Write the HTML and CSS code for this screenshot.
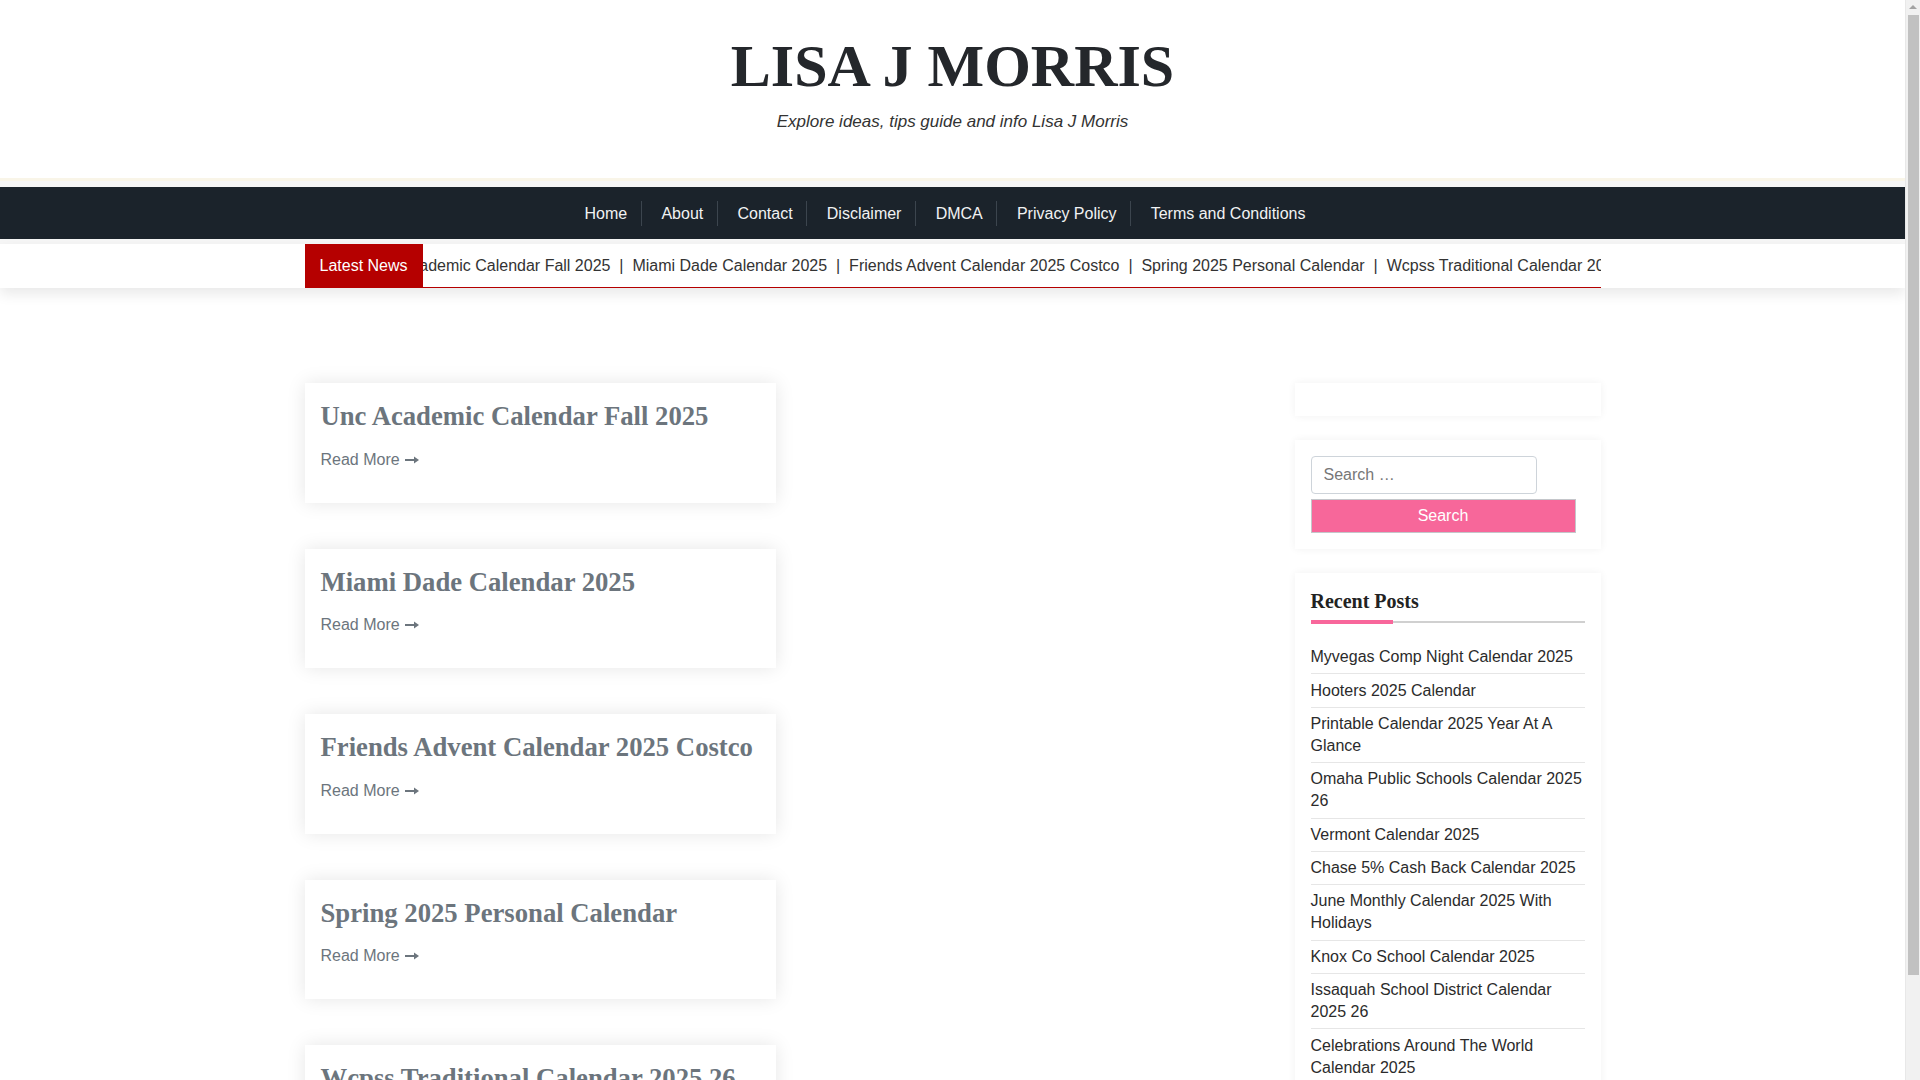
FILE: index.html
```html
<!DOCTYPE html>
<html lang="en">
<head>
<meta charset="utf-8">
<title>LISA J MORRIS</title>
<link rel="stylesheet" href="styles.css">
</head>
<body>
<header class="site-header">
  <h1 class="site-title">LISA J MORRIS</h1>
  <p class="site-tagline">Explore ideas, tips guide and info Lisa J Morris</p>
</header>
<div class="nav-wrap">
  <nav class="main-nav">
    <ul class="menu">
      <li class="menu-item">Home</li>
      <li class="menu-item">About</li>
      <li class="menu-item">Contact</li>
      <li class="menu-item">Disclaimer</li>
      <li class="menu-item">DMCA</li>
      <li class="menu-item">Privacy Policy</li>
      <li class="menu-item last">Terms and Conditions</li>
    </ul>
  </nav>
</div>
<div class="ticker-band">
  <div class="container">
    <div class="ticker">
      <span class="ticker-label">Latest News</span>
      <div class="ticker-window">
        <div class="ticker-track">
          <span class="ticker-item">Unc Academic Calendar Fall 2025</span><span class="ticker-sep">|</span><span class="ticker-item">Miami Dade Calendar 2025</span><span class="ticker-sep">|</span><span class="ticker-item">Friends Advent Calendar 2025 Costco</span><span class="ticker-sep">|</span><span class="ticker-item">Spring 2025 Personal Calendar</span><span class="ticker-sep">|</span><span class="ticker-item">Wcpss Traditional Calendar 2025 26</span>
        </div>
      </div>
    </div>
  </div>
</div>
<main class="container main">
  <div class="layout">
    <section class="posts">
      <article class="card">
        <h2 class="card-title">Unc Academic Calendar Fall 2025</h2>
        <a class="read-more">Read More <svg class="arrow" viewBox="0 0 14 10" width="14" height="10"><path d="M0 5H10" stroke="currentColor" stroke-width="2"/><path d="M9 1.5L14 5L9 8.5Z" fill="currentColor"/></svg></a>
      </article>
      <article class="card">
        <h2 class="card-title">Miami Dade Calendar 2025</h2>
        <a class="read-more">Read More <svg class="arrow" viewBox="0 0 14 10" width="14" height="10"><path d="M0 5H10" stroke="currentColor" stroke-width="2"/><path d="M9 1.5L14 5L9 8.5Z" fill="currentColor"/></svg></a>
      </article>
      <article class="card">
        <h2 class="card-title">Friends Advent Calendar 2025 Costco</h2>
        <a class="read-more">Read More <svg class="arrow" viewBox="0 0 14 10" width="14" height="10"><path d="M0 5H10" stroke="currentColor" stroke-width="2"/><path d="M9 1.5L14 5L9 8.5Z" fill="currentColor"/></svg></a>
      </article>
      <article class="card">
        <h2 class="card-title">Spring 2025 Personal Calendar</h2>
        <a class="read-more">Read More <svg class="arrow" viewBox="0 0 14 10" width="14" height="10"><path d="M0 5H10" stroke="currentColor" stroke-width="2"/><path d="M9 1.5L14 5L9 8.5Z" fill="currentColor"/></svg></a>
      </article>
      <article class="card">
        <h2 class="card-title">Wcpss Traditional Calendar 2025 26</h2>
        <a class="read-more">Read More <svg class="arrow" viewBox="0 0 14 10" width="14" height="10"><path d="M0 5H10" stroke="currentColor" stroke-width="2"/><path d="M9 1.5L14 5L9 8.5Z" fill="currentColor"/></svg></a>
      </article>
    </section>
    <aside class="sidebar">
      <div class="widget widget-empty"></div>
      <div class="widget widget-search">
        <input class="search-field" type="search" placeholder="Search …">
        <button class="search-submit" type="button">Search</button>
      </div>
      <div class="widget widget-recent">
        <h3 class="widget-title">Recent Posts</h3>
        <ul class="recent-list">
          <li>Myvegas Comp Night Calendar 2025</li>
          <li>Hooters 2025 Calendar</li>
          <li>Printable Calendar 2025 Year At A Glance</li>
          <li>Omaha Public Schools Calendar 2025 26</li>
          <li>Vermont Calendar 2025</li>
          <li>Chase 5% Cash Back Calendar 2025</li>
          <li>June Monthly Calendar 2025 With Holidays</li>
          <li>Knox Co School Calendar 2025</li>
          <li>Issaquah School District Calendar 2025 26</li>
          <li>Celebrations Around The World Calendar 2025</li>
        </ul>
      </div>
    </aside>
  </div>
</main>
<div class="scrollbar" aria-hidden="true">
  <span class="scroll-arrow"></span>
  <span class="scroll-thumb"></span>
</div>
</body>
</html>
```
FILE: styles.css
```css
* { box-sizing: border-box; }
html, body { margin: 0; padding: 0; }
body {
  width: 1905px;
  font-family: "Liberation Sans", Arial, sans-serif;
  font-size: 16px;
  line-height: 1.5;
  color: #333;
  background: #fff;
}
.container {
  width: 1296px;
  margin: 0 auto;
}

/* Header */
.site-header {
  text-align: center;
  padding: 30px 0 44px;
  border-bottom: 3px solid #f9f5e8;
}
.site-title {
  margin: 0;
  font-family: "Liberation Serif", "Times New Roman", serif;
  font-weight: 700;
  font-size: 60px;
  line-height: 72px;
  color: #24272b;
}
.site-tagline {
  margin: 7px 0 0;
  font-style: italic;
  font-size: 17px;
  line-height: 25px;
  color: #333;
}

/* Nav */
.nav-wrap {
  background: #f6f6f6;
  padding: 6px 0 5px;
}
.main-nav {
  background: #1b232b;
  height: 52px;
  display: flex;
  justify-content: center;
  align-items: center;
}
.menu {
  list-style: none;
  margin: 0;
  padding: 0 21px 0 0;
  display: flex;
  align-items: center;
}
.menu-item {
  color: #f1f2f3;
  font-size: 16px;
  line-height: 25px;
  padding: 0 13.6px 0 19.6px;
  border-right: 1px solid #3c454e;
}
.menu-item.last { border-right: none; }

/* Ticker */
.ticker-band {
  background: #fff;
  box-shadow: 0 6px 14px rgba(0, 0, 0, 0.09);
  position: relative;
}
.ticker {
  display: flex;
  height: 44px;
  border-bottom: 1px solid #b50000;
}
.ticker-label {
  flex: none;
  height: 43px;
  line-height: 43px;
  padding: 0 15px;
  background: #b50000;
  color: #fff;
  font-size: 16px;
}
.ticker-window {
  flex: 1;
  min-width: 0;
  overflow: hidden;
}
.ticker-track {
  white-space: nowrap;
  margin-left: -54px;
  line-height: 43px;
  font-size: 16px;
  color: #333;
}
.ticker-sep { margin: 0 8.9px; }

/* Main */
.main { padding: 95px 0 40px; }
.layout {
  display: grid;
  grid-template-columns: 966px 306px;
  column-gap: 24px;
  align-items: start;
}
.posts {
  display: grid;
  grid-template-columns: 471px 471px;
  column-gap: 24px;
  row-gap: 46px;
}
.card {
  grid-column: 1;
  background: #fff;
  padding: 18px 16px 16px;
  box-shadow: 0 0 18px rgba(0, 0, 0, 0.1);
}
.card-title {
  margin: 0 0 15px;
  font-family: "Liberation Serif", "Times New Roman", serif;
  font-weight: 700;
  font-size: 26.7px;
  line-height: 31.5px;
  color: #6c757d;
}
.read-more {
  display: block;
  margin-bottom: 15px;
  color: #6c757d;
  font-size: 16px;
  line-height: 24px;
}
.arrow { vertical-align: 0; margin-left: 1px; }

/* Sidebar */
.widget {
  background: #fff;
  padding: 16px;
  margin-bottom: 24px;
  box-shadow: 0 0 8px rgba(0, 0, 0, 0.06);
}
.widget-empty { height: 33px; }
.search-field {
  display: block;
  width: 226px;
  height: 38px;
  padding: 6px 12px;
  border: 1px solid #ced4da;
  border-radius: 4px;
  font-family: inherit;
  font-size: 16px;
  line-height: 24px;
  color: #333;
  margin: 0 0 5px;
}
.search-field::placeholder { color: #777; }
.search-submit {
  display: block;
  width: 265px;
  height: 34px;
  background: #f7679a;
  border: 1px solid #c4c6ca;
  color: #fff;
  font-family: inherit;
  font-size: 16px;
  padding: 0;
}
.widget-title {
  position: relative;
  margin: 0 0 18px;
  padding-bottom: 8px;
  font-family: "Liberation Serif", "Times New Roman", serif;
  font-weight: 700;
  font-size: 20px;
  line-height: 24px;
  color: #222;
  border-bottom: 2px solid #d0d0d0;
}
.widget-title::after {
  content: "";
  position: absolute;
  left: 0;
  bottom: -3px;
  width: 82px;
  height: 4px;
  background: #f8679b;
}
.recent-list {
  list-style: none;
  margin: 0;
  padding: 0;
}
.recent-list li {
  padding: 5.2px 0;
  line-height: 22px;
  font-size: 16px;
  color: #2b2b2b;
  border-bottom: 1px solid #e6e6e6;
}
.recent-list li:last-child { border-bottom: none; }

/* Fake browser scrollbar (viewport chrome) */
.scrollbar {
  position: fixed;
  top: 0;
  right: 0;
  width: 15px;
  height: 100vh;
  background: #f1f1f1;
  border-left: 1px solid #e8e8e8;
}
.scroll-arrow {
  position: absolute;
  top: 5px;
  left: 3px;
  width: 0;
  height: 0;
  border-left: 4px solid transparent;
  border-right: 4px solid transparent;
  border-bottom: 4px solid #a3a3a3;
}
.scroll-thumb {
  position: absolute;
  top: 15px;
  left: 2px;
  width: 11px;
  height: 960px;
  background: #c1c1c1;
}
```
